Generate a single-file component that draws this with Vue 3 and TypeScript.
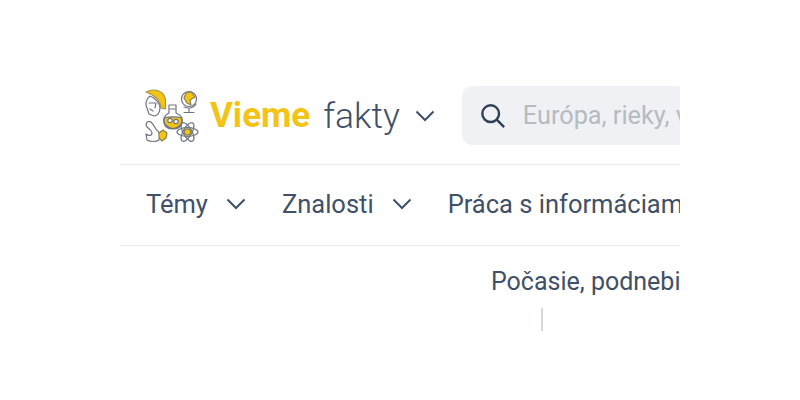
<script setup lang="ts">
const navItems: string[] = ['Témy', 'Znalosti']
</script>

<template>
  <div class="page">
    <div class="frame">
      <header class="top">
        <svg class="logo" viewBox="0 0 54 54" fill="none" stroke="#6f7680" stroke-width="1.200" stroke-linejoin="round" stroke-linecap="round">
          <!-- helmet -->
          <path d="M1 3C9 -1 19 1 20.500 11L20.500 20L16 19C15 11 10 6 1 3Z" fill="#f3c316" stroke="#a3944a" />
          <path d="M5 7C1 10 0 15 2 19L4 25L9 27C12 27 15 24 15 19C15 14 10 9 5 7Z" fill="#fff" />
          <path d="M4 14H11L10 19M5 20L8 22" />
          <!-- globe -->
          <circle cx="44" cy="10" r="7.500" fill="#fff" />
          <path d="M41 4L46 3L50 8L45 11L46 16L42 14L39 9Z" fill="#f3c316" stroke="#8a8250" />
          <path d="M51 15C49 19 44 20 39 18M44 20V23M39 23.500H49" />
          <!-- flask -->
          <path d="M24 16H31V24C36 26 38 30 37 34C36 38 32 40 28 40C24 40 20 38 19 34C18 30 20 26 24 24Z" fill="#fff" />
          <path d="M19.500 29C23 27.500 33 27.500 36.500 29C38 35 33 39.500 28 39.500C23 39.500 18 35 19.500 29Z" fill="#f3c316" />
          <circle cx="25" cy="31.500" r="2.200" fill="#fff" />
          <circle cx="31" cy="32.500" r="2.200" fill="#fff" />
          <path d="M25 20H30" />
          <!-- squirrel -->
          <path d="M6 33C2 31 0 35 2 38C4 40 7 41 7 44C7 47 3 47 1 45L2 51C5 53 11 53 14 51L15 46L13 42C11 42 10 37 6 33Z" fill="#fff" />
          <path d="M14 44L18 41L22 44L21 49L17 52L14 49Z" fill="#f3c316" stroke="#8a8250" />
          <!-- atom -->
          <g transform="translate(42.500 43)">
            <ellipse rx="10.500" ry="4.300" />
            <ellipse rx="10.500" ry="4.300" transform="rotate(60)" />
            <ellipse rx="10.500" ry="4.300" transform="rotate(120)" />
            <circle r="3.200" fill="#f3c316" stroke="#8a8250" />
          </g>
        </svg>
        <div class="brand">
          <span class="vieme">Vieme</span>
          <span class="fakty">fakty</span>
          <svg class="chev brand-chev" viewBox="0 0 20 12" fill="none"><path d="M1.500 1.500L10 10L18.500 1.500" /></svg>
        </div>
        <div class="search">
          <svg class="lens" viewBox="0 0 28 28" fill="none">
            <circle cx="11.500" cy="11.500" r="9" />
            <path d="M18 18L26 26" />
          </svg>
          <span class="placeholder">Európa, rieky, vrchy</span>
        </div>
      </header>
      <nav class="nav">
        <div v-for="item in navItems" :key="item" class="nav-item">
          <span>{{ item }}</span>
          <svg class="chev" viewBox="0 0 20 12" fill="none"><path d="M1.500 1.500L10 10L18.500 1.500" /></svg>
        </div>
        <div class="nav-item"><span>Práca s informáciami</span></div>
      </nav>
      <div class="crumb">
        <div class="crumb-title">Počasie, podnebie a klíma</div>
        <div class="tick"></div>
      </div>
    </div>
  </div>
</template>

<style>
body { background: #fff; }
</style>

<style scoped>
.page {
  width: 800px;
  height: 400px;
  padding: 80px 120px 0;
  box-sizing: border-box;
  overflow: hidden;
  font-family: Roboto, "Liberation Sans", sans-serif;
  color: #3f5068;
}
.frame { width: 560px; overflow: hidden; }
.top {
  display: flex;
  align-items: center;
  height: 85px;
  padding-left: 25px;
  padding-bottom: 13px;
  border-bottom: 1.500px solid #e8eaed;
  box-sizing: border-box;
}
.logo { width: 54px; height: 54px; flex: none; }
.brand { display: flex; align-items: center; margin-left: 11px; flex: none; }
.vieme { font-size: 35px; font-weight: 700; color: #f3c316; line-height: 40px; }
.fakty { font-size: 35.500px; font-weight: 300; margin-left: 13px; line-height: 40px; }
.chev { width: 20px; height: 12px; flex: none; }
.chev path { stroke: #3f5068; stroke-width: 2; }
.brand-chev { margin-left: 15px; }
.search {
  display: flex;
  align-items: center;
  flex: none;
  width: 400px;
  height: 59px;
  margin-left: 27px;
  padding-left: 18px;
  box-sizing: border-box;
  background: #eff1f4;
  border-radius: 10px;
}
.lens { width: 26px; height: 26px; flex: none; }
.lens circle, .lens path { stroke: #2f4057; stroke-width: 2.600; }
.placeholder { margin-left: 17px; font-size: 25.300px; color: #b5bbc3; white-space: nowrap; }
.nav {
  display: flex;
  align-items: center;
  height: 81px;
  padding-left: 26px;
  padding-bottom: 2px;
  gap: 36px;
  border-bottom: 1.500px solid #e8eaed;
  box-sizing: border-box;
  white-space: nowrap;
  font-size: 25.500px;
}
.nav-item { display: flex; align-items: center; gap: 18px; flex: none; }
.crumb { padding-left: 371px; white-space: nowrap; }
.crumb-title { font-size: 25px; margin-top: 20px; line-height: 31px; font-weight: 400; }
.tick { width: 1.500px; height: 23px; background: #d5d9de; margin: 11px 0 0 50px; }
</style>
